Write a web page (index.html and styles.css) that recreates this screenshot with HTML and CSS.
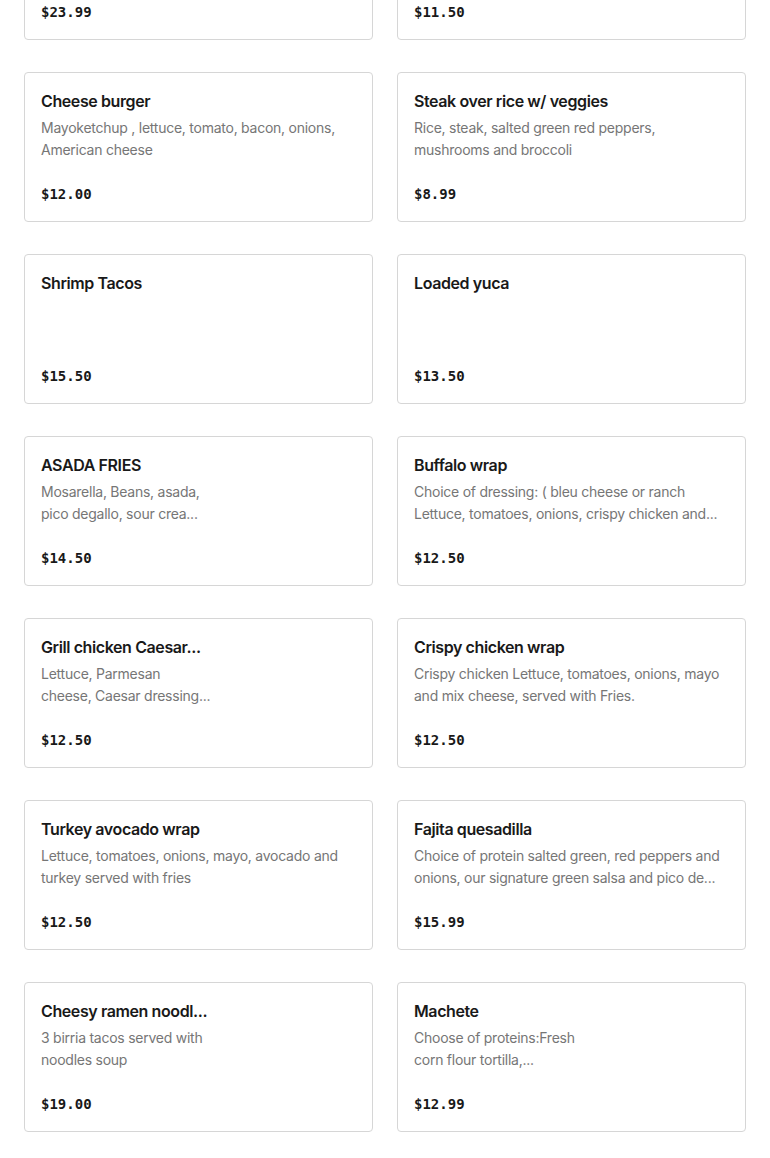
FILE: index.html
```html
<!DOCTYPE html>
<html lang="en">
<head>
<meta charset="utf-8">
<title>Menu</title>
<link rel="stylesheet" href="styles.css">
</head>
<body>
<div class="menu">
  <div class="grid">
    <div class="card"><div class="price">$23.99</div></div>
    <div class="card"><div class="price">$11.50</div></div>

    <div class="card"><div class="title">Cheese burger</div><div class="desc">Mayoketchup , lettuce, tomato, bacon, onions, American cheese</div><div class="price">$12.00</div></div>
    <div class="card"><div class="title">Steak over rice w/ veggies</div><div class="desc">Rice, steak, salted green red peppers, mushrooms and broccoli</div><div class="price">$8.99</div></div>

    <div class="card"><div class="title">Shrimp Tacos</div><div class="price">$15.50</div></div>
    <div class="card"><div class="title">Loaded yuca</div><div class="price">$13.50</div></div>

    <div class="card img"><div class="title">ASADA FRIES</div><div class="desc">Mosarella, Beans, asada, pico degallo, sour crea...</div><div class="price">$14.50</div></div>
    <div class="card"><div class="title">Buffalo wrap</div><div class="desc">Choice of dressing: ( bleu cheese or ranch<br>Lettuce, tomatoes, onions, crispy chicken and...</div><div class="price">$12.50</div></div>

    <div class="card img"><div class="title">Grill chicken Caesar...</div><div class="desc">Lettuce, Parmesan cheese, Caesar dressing...</div><div class="price">$12.50</div></div>
    <div class="card"><div class="title">Crispy chicken wrap</div><div class="desc">Crispy chicken Lettuce, tomatoes, onions, mayo and mix cheese, served with Fries.</div><div class="price">$12.50</div></div>

    <div class="card"><div class="title">Turkey avocado wrap</div><div class="desc">Lettuce, tomatoes, onions, mayo, avocado and turkey served with fries</div><div class="price">$12.50</div></div>
    <div class="card"><div class="title">Fajita quesadilla</div><div class="desc">Choice of protein salted green, red peppers and onions, our signature green salsa and pico de...</div><div class="price">$15.99</div></div>

    <div class="card img"><div class="title">Cheesy ramen noodl...</div><div class="desc">3 birria tacos served with noodles soup</div><div class="price">$19.00</div></div>
    <div class="card img"><div class="title">Machete</div><div class="desc">Choose of proteins:Fresh corn flour tortilla,...</div><div class="price">$12.99</div></div>
  </div>
</div>
</body>
</html>
```

FILE: styles.css
```css
html, body {
  margin: 0;
  padding: 0;
  background: #ffffff;
}
body {
  font-family: Inter, "Noto Sans", sans-serif;
  color: #191919;
}
.menu {
  padding: 0 24px;
  overflow: hidden;
  height: 1158px;
}
.grid {
  margin-top: -110px;
  display: grid;
  grid-template-columns: 1fr 1fr;
  column-gap: 24px;
  row-gap: 32px;
}
.card {
  box-sizing: border-box;
  height: 150px;
  border: 1px solid #d6d6d6;
  border-radius: 4px;
  padding: 16px;
  display: flex;
  flex-direction: column;
  min-width: 0;
}
.title {
  font-size: 16px;
  line-height: 24px;
  font-weight: 600;
  letter-spacing: -0.4px;
  color: #191919;
  white-space: nowrap;
}
.desc {
  margin-top: 4px;
  font-size: 14px;
  line-height: 22px;
  letter-spacing: -0.25px;
  color: #767676;
}
.card.img .title,
.card.img .desc {
  max-width: 170px;
}
.price {
  margin-top: auto;
  font-family: "DejaVu Sans Mono", "Liberation Mono", monospace;
  font-weight: bold;
  font-size: 14px;
  line-height: 22px;
  color: #191919;
}
```
